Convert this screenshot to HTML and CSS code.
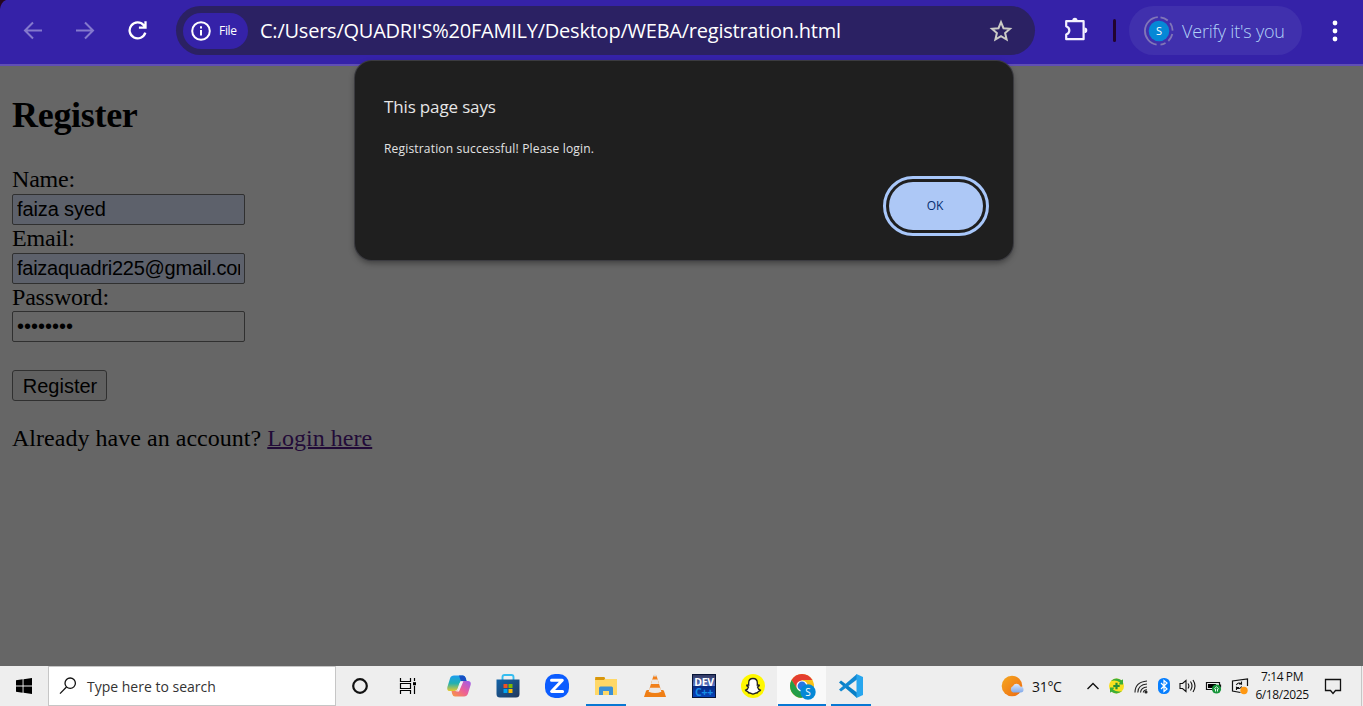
FILE: index.html
```html
<!DOCTYPE html>
<html lang="en">
<head>
<meta charset="utf-8">
<title>Register</title>
<link rel="stylesheet" href="styles.css">
</head>
<body>
<header class="toolbar">
  <svg class="corner" width="6" height="9" viewBox="0 0 6 9"><path d="M0 0h6Q1 2 0 9z" fill="#25061f"/></svg>
  <nav class="nav">
    <svg width="20" height="20" viewBox="0 0 20 20" fill="none" stroke="#8479cd" stroke-width="2"><path d="M19 10.5H2M10 2.5l-8 8 8 8"/></svg>
    <svg width="20" height="20" viewBox="0 0 20 20" fill="none" stroke="#8479cd" stroke-width="2"><path d="M1 10.5h17M10 2.5l8 8-8 8"/></svg>
    <svg width="20" height="20" viewBox="0 0 20 20" fill="none" stroke="#fff" stroke-width="2.3"><path d="M18.300 12.600A8 8 0 1 1 16.700 5.200L18.100 6.900M18.500 1.200v6.500h-6.600"/></svg>
  </nav>
  <div class="omnibox">
    <div class="chip">
      <svg width="20" height="20" viewBox="0 0 20 20" fill="none" stroke="#fff" stroke-width="2"><circle cx="10" cy="10" r="8.800"/><path d="M10 9v5.600M10 5.200v2.200"/></svg>
      <span class="chip-text">File</span>
    </div>
    <span class="url">C:/Users/QUADRI'S%20FAMILY/Desktop/WEBA/registration.html</span>
    <svg class="star" width="24" height="24" viewBox="0 0 24 24" fill="none" stroke="#cbcbc6" stroke-width="2"><path d="M12 3.200l2.500 6 6.500.6-4.900 4.300 1.500 6.400-5.600-3.400-5.600 3.400 1.500-6.400L3 9.800l6.500-.6z"/></svg>
  </div>
  <svg class="ext" width="26" height="26" viewBox="0 0 26 26"><path d="M3.200 4.200H20.600V22.200H3.200V17.500C7.400 15.700 7.400 11.100 3.200 9.300z" fill="none" stroke="#f4f2ff" stroke-width="2.200" stroke-linejoin="round"/><path d="M9.300 3.400a2.600 2.600 0 0 1 5.200 0zM21.500 10.500a2.800 2.800 0 0 1 0 5.600z" fill="#f4f2ff"/></svg>
  <span class="divider"></span>
  <div class="profile">
    <svg width="30" height="30" viewBox="0 0 30 30"><circle cx="15" cy="15" r="10.300" fill="#0688d6"/><path d="M12.600 28.600A13.800 13.800 0 0 1 13.800 1.200" fill="none" stroke="#8176b8" stroke-width="1.800"/><path d="M16.500 1.300A13.800 13.800 0 0 1 16.500 28.700" fill="none" stroke="#8176b8" stroke-width="1.800" stroke-dasharray="8 3.500"/><text class="avatar-letter" x="15" y="19" text-anchor="middle" fill="#fff">S</text></svg>
    <span class="verify">Verify it's you</span>
  </div>
  <svg class="menu" width="6" height="22" viewBox="0 0 6 22" fill="#fff"><circle cx="3" cy="3" r="2.400"/><circle cx="3" cy="11" r="2.400"/><circle cx="3" cy="19" r="2.400"/></svg>
</header>

<main class="page">
  <h2 class="title">Register</h2>
  <form class="form">
    <label class="label" for="n">Name:</label>
    <input class="field filled" id="n" type="text" value="faiza syed">
    <label class="label" for="e">Email:</label>
    <input class="field filled email" id="e" type="text" value="faizaquadri225@gmail.com">
    <label class="label" for="p">Password:</label>
    <input class="field" id="p" type="password" value="password">
    <button class="submit" type="button">Register</button>
  </form>
  <p class="account">Already have an account? <a class="link" href="#">Login here</a></p>
</main>

<section class="dialog">
  <h1 class="dialog-title">This page says</h1>
  <p class="dialog-text">Registration successful! Please login.</p>
  <button class="ok" type="button">OK</button>
</section>

<footer class="taskbar">
  <div class="start"><svg width="16" height="16" viewBox="0 0 16 16"><path d="M0 2.300L6.600 1.300V7.500H0zM7.500 1.200L16 0V7.500H7.500zM0 8.500H6.600V14.700L0 13.700zM7.500 8.500H16V16L7.500 14.800z"/></svg></div>
  <div class="search">
    <svg width="18" height="18" viewBox="0 0 18 18" fill="none" stroke="#111" stroke-width="1.300"><circle cx="11.200" cy="6.200" r="5.200"/><path d="M7.500 10L1 16.600"/></svg>
    <span class="search-text">Type here to search</span>
  </div>
  <div class="task sys"><svg width="18" height="18" viewBox="0 0 18 18"><circle cx="9" cy="9" r="6.800" fill="none" stroke="#111" stroke-width="2.200"/></svg></div>
  <div class="task sys"><svg width="18" height="18" viewBox="0 0 18 18" fill="none" stroke="#000" stroke-width="1.200"><path d="M1.500 1v3.500h10V1M1.500 17v-3.500h10V17M1.500 6.500h10v5h-10zM15.500 1v3M15.500 8.800V17"/><rect x="14" y="5.200" width="3" height="3" fill="#000" stroke="none"/></svg></div>
  <div class="apps">
    <div class="task"><svg width="24" height="24" viewBox="0 0 24 24">
      <defs><linearGradient id="ca" x1="0" y1="0" x2="0" y2="1"><stop offset="0" stop-color="#1b9df0"/><stop offset=".5" stop-color="#23b0b0"/><stop offset="1" stop-color="#e6c92c"/></linearGradient><linearGradient id="cb" x1="1" y1="0" x2="0" y2="1"><stop offset="0" stop-color="#9a5cf0"/><stop offset=".5" stop-color="#ec5e98"/><stop offset="1" stop-color="#f99a3c"/></linearGradient></defs>
      <path d="M7 1.600h9q2 0 2.800 2.600l.8 3H15q-2 0-2.600 2l-1.800 5.400Q10 17 7.600 17H3Q-.4 17 .4 13L3 4.400Q4 1.600 7 1.600z" fill="url(#ca)"/><path d="M12 1.600h4q2 0 2.800 2.600l.8 3H14z" fill="#174fc4"/>
      <path d="M16.400 7H21q3.400 0 2.600 4L21 19.500Q20 22.500 17 22.500H8q-2 0-2.800-2.600L4.500 17H9q2 0 2.600-2l2-6q.6-2 2.800-2z" fill="url(#cb)"/><path d="M13.400 7.300h3L12 17.500H8.500q2 0 2.600-2z" fill="#f4eef4"/></svg></div>
    <div class="task"><svg width="24" height="24" viewBox="0 0 24 24"><defs><linearGradient id="st" x1="0" y1="0" x2="1" y2="1"><stop offset="0" stop-color="#1264a8"/><stop offset="1" stop-color="#23375b"/></linearGradient></defs><path d="M6.500 6V3q0-2 2-2h7q2 0 2 2v3" fill="none" stroke="#35bdf0" stroke-width="1.900"/><path d="M.5 5.500h23V20q0 3.500-3.500 3.500H4Q.5 23.500.5 20z" fill="url(#st)"/><path d="M7.500 10h4v4h-4z" fill="#f25022"/><path d="M12.500 10h4v4h-4z" fill="#7fba00"/><path d="M7.500 15h4v4h-4z" fill="#00a4ef"/><path d="M12.500 15h4v4h-4z" fill="#ffb900"/></svg></div>
    <div class="task"><svg width="24" height="24" viewBox="0 0 24 24"><rect width="24" height="24" rx="10" fill="#0b5cff"/><path d="M6.500 6.300h10.800L6.600 17.500h11" fill="none" stroke="#fff" stroke-width="3" stroke-linejoin="round" stroke-linecap="round"/></svg></div>
    <div class="task running"><svg width="24" height="24" viewBox="0 0 24 24"><path d="M1 3h9l1.500 2H23v16H1z" fill="#ffd867"/><path d="M1.500 3H10q1 0 1 1.500L10 6H1z" fill="#d8960c"/><path d="M5 21v-7q0-1.500 1.500-1.500h11Q19 12.500 19 14v7h-4v-4H9v4z" fill="#3b90d6"/></svg></div>
    <div class="task"><svg width="24" height="24" viewBox="0 0 24 24"><path d="M4.500 16h15q1 0 1.500 1l2 6H1l2-6q.5-1 1.500-1z" fill="#ef7e14"/><path d="M10.500 1.500h3L18.500 18Q12 21 5.500 18z" fill="#f2801a"/><path d="M9.300 5.500h5.400L16 10H8zM6.800 13.800h10.400l1.200 4q-6.400 2.600-12.800 0z" fill="#ece8e5"/><path d="M11 .5h2l.6 2h-3.200z" fill="#ddd"/></svg></div>
    <div class="task"><svg width="24" height="24" viewBox="0 0 24 24"><defs><linearGradient id="dv" x1="0" y1="0" x2="0" y2="1"><stop offset="0" stop-color="#30355b"/><stop offset=".48" stop-color="#5876c7"/><stop offset=".52" stop-color="#082a80"/><stop offset="1" stop-color="#0643bd"/></linearGradient></defs><rect x=".5" y=".5" width="23" height="23" fill="url(#dv)" stroke="#071438"/><text class="dev" x="12" y="11.500" text-anchor="middle" fill="#fff">DEV</text><text class="dev" x="12" y="22" text-anchor="middle" fill="#168de8">C++</text></svg></div>
    <div class="task"><svg width="24" height="24" viewBox="0 0 24 24"><circle cx="12" cy="12" r="12" fill="#fff800"/><path d="M12 4.500c3 0 4.300 2 4.300 4.300v2.400l1.700-.3.300.8-1.800 1.300c.5 1.900 1.700 2.800 3 3.200-.2 1-1.400 1-2.300 1.300l-.6 1.300c-2-.3-2.900 1.200-4.600 1.200s-2.600-1.500-4.600-1.200l-.6-1.300c-.9-.3-2.100-.3-2.300-1.300 1.300-.4 2.500-1.300 3-3.200l-1.800-1.300.3-.8 1.700.3V8.800c0-2.300 1.300-4.300 4.300-4.300z" fill="#fff" stroke="#222" stroke-width="1.300"/></svg></div>
    <div class="task running active"><svg class="chrome" width="28" height="28" viewBox="0 0 28 28"><circle cx="13" cy="13" r="12" fill="#fbc116"/><path d="M2.600 7A12 12 0 0 1 23.400 7H13L8 16z" fill="#e43d30"/><path d="M2.600 7A12 12 0 0 0 12.500 25L18 16 8 15.500z" fill="#249e49"/><circle cx="13" cy="13" r="5.600" fill="#fff"/><circle cx="13" cy="13" r="4.400" fill="#2778e5"/><circle cx="19" cy="19" r="7.700" fill="#0688d6"/><text class="badge-letter" x="19" y="22.500" text-anchor="middle" fill="#fff">S</text></svg></div>
    <div class="task running"><svg width="24" height="24" viewBox="0 0 24 24"><path d="M0 8.500L2 6.500 18 18.500V24z" fill="#087fc6"/><path d="M0 15.500l2 2L18 5.500V0z" fill="#1288d2"/><path d="M17.500 0L24 3v18l-6.500 3z" fill="#27a6ee"/></svg></div>
  </div>
  <div class="tray">
    <svg class="weather" width="24" height="22" viewBox="0 0 24 22"><defs><linearGradient id="su" x1="0" y1="0" x2="1" y2="1"><stop offset="0" stop-color="#f5a81f"/><stop offset="1" stop-color="#ee6912"/></linearGradient><linearGradient id="cl" x1="0" y1="0" x2="0" y2="1"><stop offset="0" stop-color="#dce7fa"/><stop offset="1" stop-color="#80a9ea"/></linearGradient></defs><circle cx="11" cy="11" r="10.300" fill="url(#su)"/><path d="M12 17.500a3.500 3.500 0 0 1 0-6.500 4 4 0 0 1 7.300.5 3 3 0 0 1 .4 6z" fill="url(#cl)"/></svg>
    <span class="temp">31°C</span>
    <div class="tray-icons">
      <svg width="14" height="18" viewBox="0 0 14 18"><path d="M1.500 12L7 6.500l5.500 5.500" fill="none" stroke="#111" stroke-width="1.400"/></svg>
      <svg width="17" height="18" viewBox="0 0 17 18"><circle cx="8.500" cy="9" r="7.500" fill="#f8e020"/><path d="M3 4Q8-.5 13.500 3.300L15 2.300V7.500H10.500L12 5.500Q8 2.500 3 4zM14 14Q9 18.500 3.500 14.700L2 15.700V10.500H6.500L5 12.500Q9 15.500 14 14z" fill="#3dae38"/><path d="M8.500 5.800v6.400M5.300 9h6.400" stroke="#258e35" stroke-width="2.200"/></svg>
      <svg width="16" height="18" viewBox="0 0 16 18" fill="none" stroke="#222" stroke-width="1.100"><path d="M2 15.500Q2 5 14 4M4.800 15.500Q5 7.700 14 7M7.500 15.500Q8 10.500 14 10M10.300 15.500Q10.500 13 14 12.800"/><circle cx="13" cy="15" r="1" fill="#111"/></svg>
      <svg width="14" height="18" viewBox="0 0 14 18"><rect x="1" y="1" width="12" height="16" rx="5.500" fill="#087ffe"/><path d="M4 6l6 6-3 2.500v-11L10 6l-6 6" fill="none" stroke="#fff" stroke-width="1.200"/></svg>
      <svg width="18" height="18" viewBox="0 0 18 18" fill="none" stroke="#111" stroke-width="1.100"><path d="M1 6.500h2.500l3.500-3v11l-3.500-3H1zM9 6.500q1.800 2.500 0 5M11.500 4.500q3 4.500 0 9M14 3q4 6 0 12"/></svg>
      <svg width="18" height="18" viewBox="0 0 18 18"><path d="M1.500 5.500h13v7h-13zM15.500 7.500v3" fill="none" stroke="#111" stroke-width="1.200"/><path d="M3 7h8v4H3z"/><circle cx="11.500" cy="12" r="4.600" fill="#16953a"/><path d="M9.200 12l2.300-2.200 2.300 2.200M10.500 12v2.500M12.500 12v2.500" fill="none" stroke="#fff" stroke-width=".9"/></svg>
      <svg width="18" height="18" viewBox="0 0 18 18"><path d="M9.500 15.500L1.500 14V4L16.500 2V9" fill="none" stroke="#111" stroke-width="1.200"/><path d="M5.300 8Q7.500 4.500 10.500 7V4.500M10.500 7H8M10.700 9.500Q8.500 13 5.500 10.500V13M5.500 10.500H8" fill="none" stroke="#111" stroke-width="1.100"/><circle cx="13" cy="13.500" r="3.700" fill="#ff9812"/></svg>
    </div>
    <div class="clock"><span class="time">7:14 PM</span><span class="date">6/18/2025</span></div>
    <svg class="note" width="18" height="18" viewBox="0 0 18 18"><path d="M1.500 2.500h15v11h-5l-2.500 3-2.500-3h-5z" fill="none" stroke="#111" stroke-width="1.300"/></svg>
    <span class="peek"></span>
  </div>
</footer>
</body>
</html>
```
FILE: styles.css
```css
* { box-sizing: border-box; }
body { margin: 0; width: 1363px; height: 706px; display: flex; flex-direction: column; overflow: hidden; position: relative; background: #666; font-family: "Open Sans", "Noto Sans", sans-serif; }
svg { display: block; flex: none; }
span { white-space: nowrap; }

.toolbar { height: 66px; flex: none; display: flex; align-items: flex-start; background: #3522a8; border-bottom: 2px solid #604eb5; padding-top: 6px; position: relative; }
.corner { position: absolute; left: 0; top: 0; }
.nav { display: flex; gap: 32px; padding: 14px 0 0 23px; width: 176px; flex: none; }
.omnibox { width: 859px; height: 49px; flex: none; border-radius: 25px; background: #2b2163; display: flex; align-items: center; padding: 0 22px 0 7px; }
.chip { width: 65px; height: 36px; border-radius: 18px; background: #3522a8; display: flex; align-items: center; gap: 8px; padding-left: 8px; flex: none; }
.chip-text { color: #fff; font-size: 12px; letter-spacing: -.3px; }
.url { color: #fff; font-size: 20px; margin-left: 12px; letter-spacing: -.23px; }
.star { margin-left: auto; }
.ext { margin: 11px 0 0 28px; }
.divider { width: 3px; height: 23px; border-radius: 2px; background: #22042f; margin: 13px 0 0 24px; }
.profile { width: 173px; height: 49px; border-radius: 25px; background: #4030ad; margin-left: 13px; display: flex; align-items: center; gap: 8px; padding-left: 15px; flex: none; }
.avatar-letter { font: 11px "Open Sans", sans-serif; }
.badge-letter { font: 10px "Open Sans", sans-serif; }
.dev { font: bold 10.5px "Open Sans", sans-serif; letter-spacing: -.3px; }
.verify { color: #b1d2f8; font-size: 18px; font-weight: 300; letter-spacing: -.2px; }
.menu { margin: 14px 0 0 30px; }

.page { flex: 1; padding: 0 12px; font-family: "Liberation Serif", "Times New Roman", serif; font-size: 24px; color: #000; }
.title { font-size: 36px; line-height: 42px; margin: 28px 0 29.5px; letter-spacing: -.3px; }
.form { display: flex; flex-direction: column; align-items: flex-start; margin: 0; }
.label { height: 27.5px; line-height: 26px; letter-spacing: -.2px; }
.label:first-child { height: 28.5px; line-height: 27px; }
.field { width: 233px; height: 31px; border: 1px solid #303030; border-radius: 2px; background: #666; padding: 0 4px; font: 20px "Liberation Sans", Arial, sans-serif; color: #000; outline: none; }
.filled { background: #5d616b; letter-spacing: -.12px; }
.email { letter-spacing: -.26px; }
.submit { width: 95px; height: 31px; margin-top: 28px; padding: 1px 0 0 1px; border: 1px solid #303030; border-radius: 3px; background: #606060; color: #000; font: 20px "Liberation Sans", Arial, sans-serif; }
.account { margin: 24px 0 0; line-height: 27px; letter-spacing: .03px; }
.link { color: #220b38; text-decoration-thickness: 2px; }

.dialog { position: absolute; left: 355px; top: 61px; width: 657.5px; height: 199px; border-radius: 17px; background: #1f1f1f; box-shadow: 0 0 0 1px #3b3b40, 0 3px 6px rgba(0,0,0,.4); padding: 33px 29.5px 27px 29px; display: flex; flex-direction: column; }
.dialog-title { margin: 0; font-size: 17px; line-height: 26px; font-weight: 500; letter-spacing: -.15px; color: #e6e6e6; white-space: nowrap; }
.dialog-text { margin: 19px 0 0; font-size: 12px; line-height: 20px; letter-spacing: .18px; color: #e3e3e3; white-space: nowrap; }
.ok { align-self: flex-end; margin-top: 23px; width: 94px; height: 48px; padding: 0 2px 2px 0; flex: none; border: 0; border-radius: 24px; background: #adc8f6; outline: 3px solid #a8c7fa; outline-offset: 3px; color: #062e6f; font: 12px "Open Sans", sans-serif; }

.taskbar { height: 40px; flex: none; display: flex; background: #eee; color: #111; }
.start { width: 48px; display: flex; align-items: center; justify-content: center; }
.search { width: 288px; border: 1px solid #c6c6c6; background: #fff; display: flex; align-items: center; gap: 10px; padding-left: 10px; }
.search-text { font-size: 14px; color: #333; }
.task { width: 49px; height: 40px; display: flex; align-items: center; justify-content: center; }
.sys { width: 48px; }
.apps { display: flex; padding-left: 2px; }
.running { background: linear-gradient(#0878d3, #0878d3) center bottom / 40px 2px no-repeat; }
.active { background: linear-gradient(#0878d3, #0878d3) center bottom / 48px 2px no-repeat, #f9f9f9; }
.chrome { margin: 2px 0 0 2px; }
.tray { flex: 1; display: flex; align-items: center; padding-left: 126px; }
.temp { font-size: 14px; margin-left: 7px; width: 30px; letter-spacing: -.3px; }
.tray-icons { display: flex; align-items: center; gap: 8px; margin-left: 24px; flex: none; }
.clock { display: flex; flex-direction: column; align-items: center; font-size: 12px; line-height: 18px; width: 54px; margin-left: 6px; flex: none; }
.time, .date { letter-spacing: -.4px; }
.note { margin-left: 15px; }
.peek { width: 1px; height: 40px; background: #c5c5c5; margin: 0 1px 0 auto; }
```
